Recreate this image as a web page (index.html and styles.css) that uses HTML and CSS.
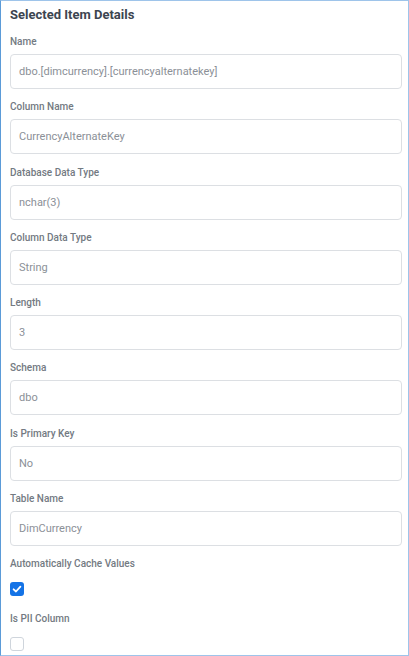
FILE: index.html
```html
<!DOCTYPE html>
<html>
  <head>
    <title>Selected Item Details</title>
    <link rel="stylesheet" href="styles.css">
  </head>
  <body>
    <div class="panel">
      <h2 class="panel-title">Selected Item Details</h2>

      <div class="field">
        <div class="field-label">Name</div>
        <div class="field-input">dbo.[dimcurrency].[currencyalternatekey]</div>
      </div>
      <div class="field">
        <div class="field-label">Column Name</div>
        <div class="field-input">CurrencyAlternateKey</div>
      </div>
      <div class="field">
        <div class="field-label">Database Data Type</div>
        <div class="field-input">nchar(3)</div>
      </div>
      <div class="field">
        <div class="field-label">Column Data Type</div>
        <div class="field-input">String</div>
      </div>
      <div class="field">
        <div class="field-label">Length</div>
        <div class="field-input">3</div>
      </div>
      <div class="field">
        <div class="field-label">Schema</div>
        <div class="field-input">dbo</div>
      </div>
      <div class="field">
        <div class="field-label">Is Primary Key</div>
        <div class="field-input">No</div>
      </div>
      <div class="field">
        <div class="field-label">Table Name</div>
        <div class="field-input">DimCurrency</div>
      </div>

      <div class="field check-field">
        <div class="field-label">Automatically Cache Values</div>
        <span class="checkbox checked">
          <svg viewBox="0 0 14 14" width="14" height="14"><path d="M3.6 7.3 L6 9.5 L10.4 4.7" fill="none" stroke="#fff" stroke-width="1.8" stroke-linecap="round" stroke-linejoin="round"/></svg>
        </span>
      </div>
      <div class="field check-field">
        <div class="field-label">Is PII Column</div>
        <span class="checkbox"></span>
      </div>
    </div>
  </body>
</html>
```

FILE: styles.css
```css
body {
  margin: 0;
  font-family: Roboto, "Liberation Sans", sans-serif;
  background: #fff;
}
.panel {
  box-sizing: border-box;
  width: 409px;
  height: 656px;
  border: 1px solid #9ec4ea;
  border-left-color: #5b9bd8;
  padding: 5px 6px 0 9px;
}
.panel-title {
  margin: 0;
  font-size: 13px;
  line-height: 18px;
  font-weight: 700;
  color: #3c4550;
}
.field {
  margin-top: 11px;
}
.field + .field {
  margin-top: 11.3px;
}
.field-label {
  font-size: 10px;
  line-height: 14px;
  font-weight: 500;
  color: #737a82;
}
.field-input {
  box-sizing: border-box;
  margin-top: 5px;
  height: 35px;
  border: 1px solid #dcdfe3;
  border-radius: 4px;
  padding: 0 8px;
  font-size: 11px;
  line-height: 33px;
  color: #8b9097;
}
.check-field .checkbox {
  margin-top: 11px;
}
.check-field + .check-field {
  margin-top: 16px;
}
.check-field + .check-field .checkbox {
  margin-top: 11px;
}
.checkbox {
  box-sizing: border-box;
  display: block;
  width: 14px;
  height: 14px;
  border: 1px solid #cfd5dc;
  border-radius: 3px;
  background: #fff;
}
.checkbox.checked {
  border: none;
  background: #1473e6;
}
.checkbox svg {
  display: block;
}
```
